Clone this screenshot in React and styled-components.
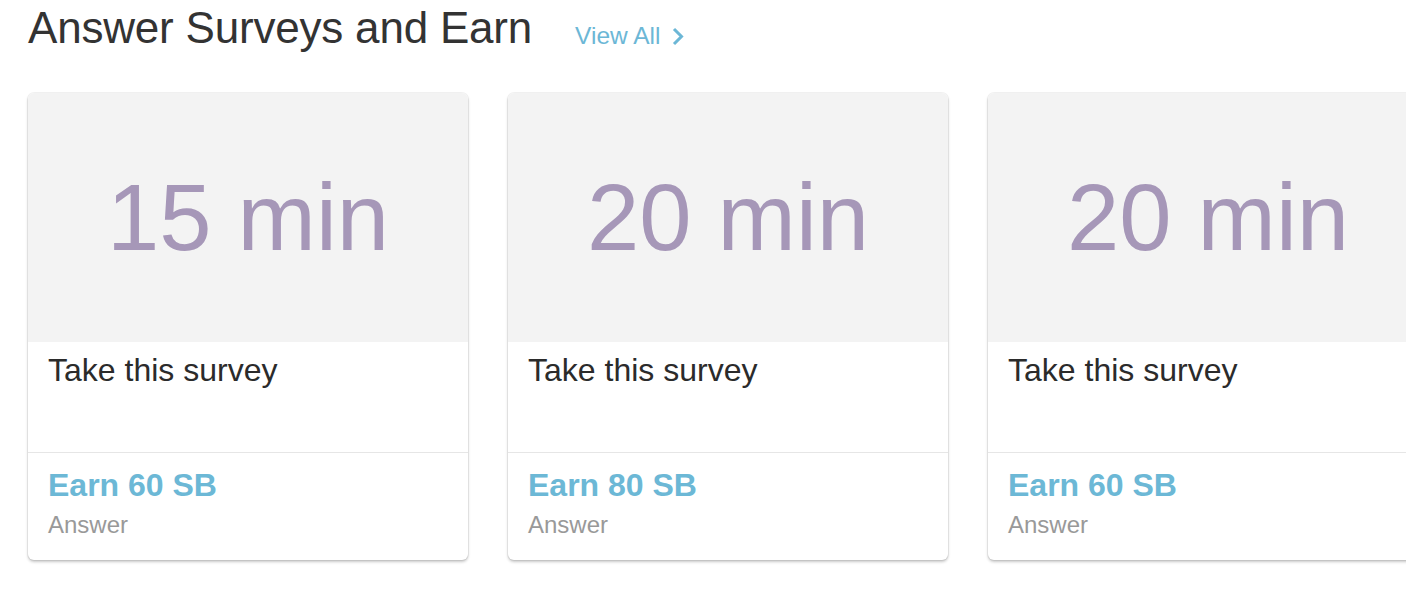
import React from "react";
import styled, { createGlobalStyle } from "styled-components";

const Global = createGlobalStyle`
  body {
    margin: 0;
    background: #fff;
    font-family: "Liberation Sans", Arial, sans-serif;
    overflow: hidden;
  }
`

const Page = styled.div`
  padding: 2px 0 0 28px;
  width: 1406px;
  height: 608px;
  box-sizing: border-box;
  overflow: hidden;
`

const Header = styled.div`
  display: flex;
  align-items: baseline;
  gap: 43px;
  height: 52px;
  margin-bottom: 39px;
`

const Title = styled.h2`
  margin: 0;
  font-size: 44px;
  line-height: 52px;
  font-weight: 400;
  color: #333;
  letter-spacing: -0.2px;
`

const ViewAll = styled.a`
  display: flex;
  align-items: center;
  gap: 12px;
  font-size: 24.5px;
  color: #6cb7d6;
  text-decoration: none;
  position: relative;
  top: 1px;
`

const Row = styled.div`
  display: flex;
  gap: 40px;
`

const Card = styled.div`
  flex: 0 0 440px;
  height: 467px;
  border-radius: 6px;
  background: #fff;
  overflow: hidden;
  box-shadow: 0 0 0 1px rgba(0, 0, 0, 0.05), 0 2px 3px rgba(0, 0, 0, 0.22);
  display: flex;
  flex-direction: column;
`

const Duration = styled.div`
  height: 249px;
  background: #f3f3f3;
  display: flex;
  align-items: center;
  justify-content: center;
  font-size: 94px;
  line-height: 1;
  color: #a697b8;
`

const Body = styled.div`
  height: 111px;
  padding: 10px 20px 0;
  box-sizing: border-box;
  border-bottom: 1px solid #e6e6e6;
  font-size: 32px;
  line-height: 37px;
  color: #2b2b2b;
`

const Footer = styled.div`
  padding: 13px 20px 0;
`

const Reward = styled.div`
  font-size: 32px;
  line-height: 38px;
  font-weight: 700;
  color: #6cb8d6;
`

const Action = styled.div`
  margin-top: 7px;
  font-size: 24px;
  line-height: 28px;
  color: #999;
`

const surveys = [
  { minutes: 15, points: 60 },
  { minutes: 20, points: 80 },
  { minutes: 20, points: 60 },
]

const App = () => {
  return (
    <Page>
      <Global />
      <Header>
        <Title>Answer Surveys and Earn</Title>
        <ViewAll href="#">
          View All
          <svg width="12" height="19" viewBox="0 0 12 19">
            <polyline points="2,2 9.5,9.5 2,17" fill="none" stroke="#6cb7d6" strokeWidth="3" />
          </svg>
        </ViewAll>
      </Header>
      <Row>
        {surveys.map((s, i) => (
          <Card key={i}>
            <Duration>{s.minutes} min</Duration>
            <Body>Take this survey</Body>
            <Footer>
              <Reward>Earn {s.points} SB</Reward>
              <Action>Answer</Action>
            </Footer>
          </Card>
        ))}
      </Row>
    </Page>
  )
}

export default App
